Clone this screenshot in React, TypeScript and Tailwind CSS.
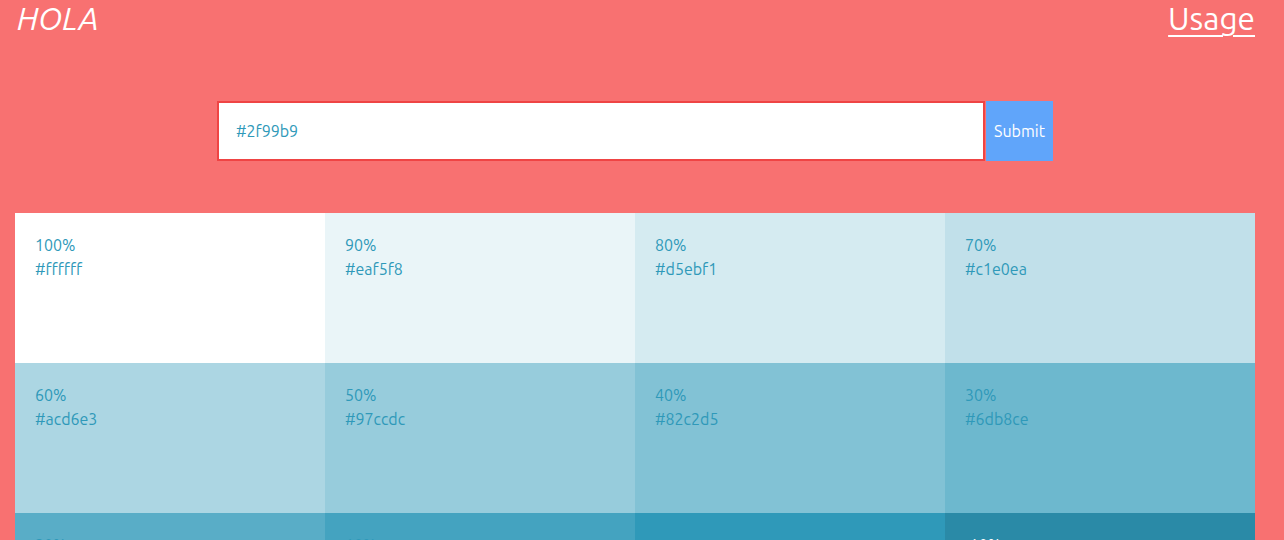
const shades = [
  { pct: "100%", hex: "#ffffff" },
  { pct: "90%", hex: "#eaf5f8" },
  { pct: "80%", hex: "#d5ebf1" },
  { pct: "70%", hex: "#c1e0ea" },
  { pct: "60%", hex: "#acd6e3" },
  { pct: "50%", hex: "#97ccdc" },
  { pct: "40%", hex: "#82c2d5" },
  { pct: "30%", hex: "#6db8ce" },
  { pct: "20%", hex: "#59adc7" },
  { pct: "10%", hex: "#44a3c0" },
  { pct: "0%", hex: "#2f99b9" },
  { pct: "-10%", hex: "#2a8aa7" },
];

const App = () => {
  return (
    <div className="min-h-[540px] bg-[#f87171] font-['Ubuntu','Noto_Sans',sans-serif]">
      <div className="w-[1270px] px-[15px]">
        <header className="flex items-center justify-between h-[38px]">
          <a className="text-[31.5px] italic text-white leading-none pl-[2px]">HOLA</a>
          <a className="text-[31.5px] text-white underline underline-offset-[5px] decoration-2 leading-none">Usage</a>
        </header>

        <form className="flex mt-[63px] ml-[202px]">
          <input
            defaultValue="#2f99b9"
            className="w-[768px] h-[60px] bg-white border-2 border-[#ef4444] px-[17px] text-[16px] text-[#2f99b9] outline-none"
          />
          <button type="button" className="ml-px w-[67px] h-[60px] bg-[#60a5fa] text-white text-[16px]">
            Submit
          </button>
        </form>

        <div className="grid grid-cols-4 mt-[52px]">
          {shades.map((s) => (
            <div
              key={s.pct}
              className="h-[150px] px-5 pt-[20px] text-[16px] leading-6"
              style={{ backgroundColor: s.hex, color: s.pct === "-10%" ? "#ffffff" : "#2f99b9" }}
            >
              <div>{s.pct}</div>
              <div>{s.hex}</div>
            </div>
          ))}
        </div>
      </div>
    </div>
  );
};

export default App;
